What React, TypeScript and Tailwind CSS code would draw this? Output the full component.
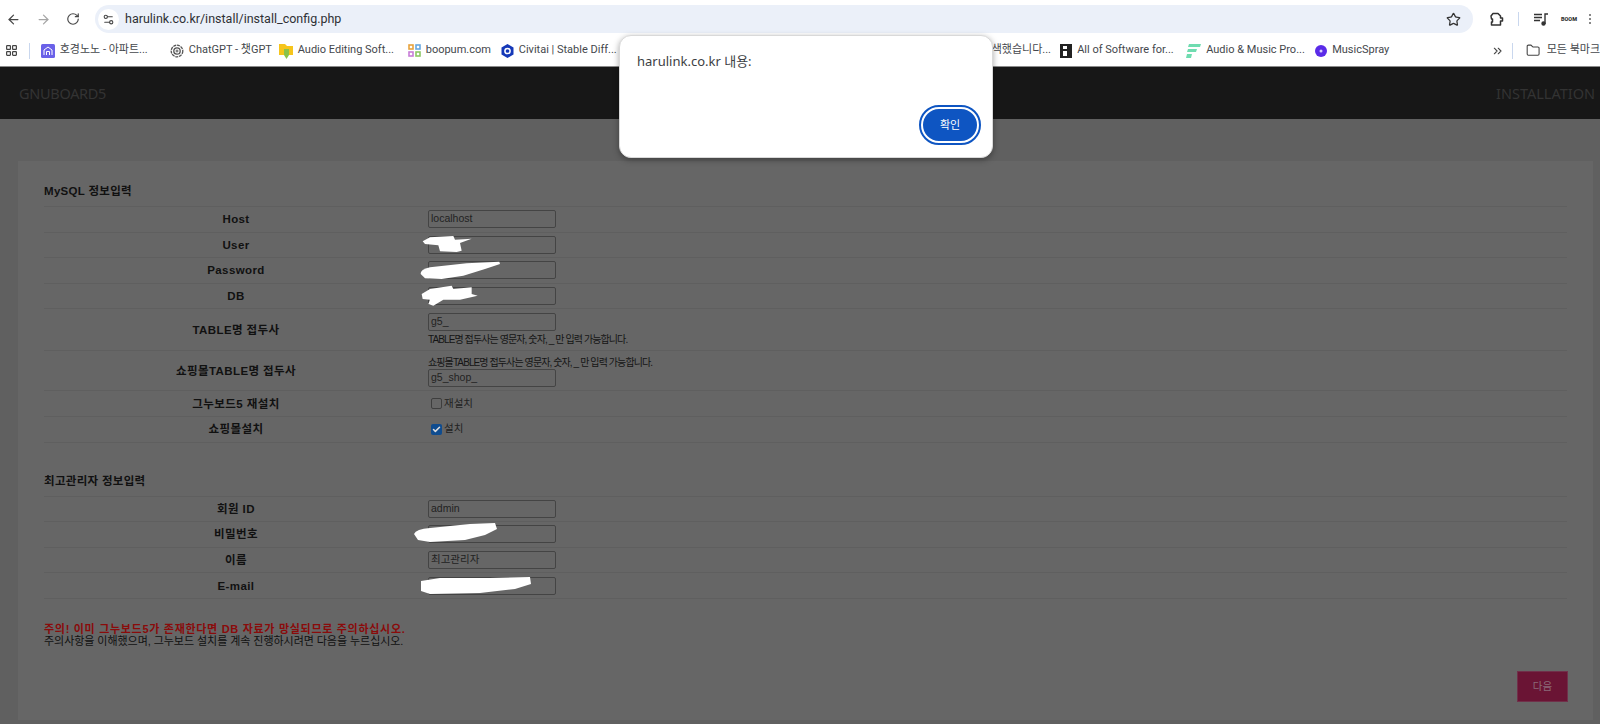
import { ArrowLeft, ArrowRight, Check, ChevronsRight, Folder, LayoutGrid, RotateCw, Settings2, Star } from 'lucide-react'
import type { ReactNode } from 'react'

const uiFont = 'font-["Roboto","Noto_Sans_CJK_KR",sans-serif]'
const dialogFont = 'font-["Noto_Sans","Noto_Sans_CJK_KR",sans-serif]'
const pageFont = 'font-["Liberation_Sans","Noto_Sans_CJK_KR",sans-serif]'

function Bookmark({ icon, text, className }: { icon: ReactNode; text: string; className: string }) {
  return (
    <div className={`flex items-center shrink-0 ${className}`}>
      {icon}
      <span className="ml-[5px] text-[11px] text-[#44474c] whitespace-nowrap">{text}</span>
    </div>
  )
}

function Row({ label, className = 'h-[25.6px]', children }: { label: string; className?: string; children: ReactNode }) {
  return (
    <div className={`flex items-center border-b border-[#5f5f5f] ${className}`}>
      <div className="w-[384px] pt-px text-center text-[11.5px] font-bold tracking-[0.4px] text-[#111]">{label}</div>
      <div className="flex-1">{children}</div>
    </div>
  )
}

function Field({ value = '', scribble }: { value?: string; scribble?: ReactNode }) {
  return (
    <div className="relative w-[128px] h-[18px] border-[1.5px] border-[#444] rounded-[2px] px-[2px] text-[10.5px] leading-[14px] text-[#222]">
      {value}
      {scribble}
    </div>
  )
}

function Scribble({ className, box, d }: { className: string; box: string; d: string }) {
  return (
    <svg className={`absolute max-w-none ${className}`} viewBox={box} fill="#fff">
      <path d={d} />
    </svg>
  )
}

function SectionTitle({ children, className }: { children: ReactNode; className: string }) {
  return <div className={`text-[11.5px] font-bold tracking-[0.3px] text-[#111] leading-[15px] ${className}`}>{children}</div>
}

export default function App() {
  return (
    <div className={`relative w-[1600px] h-[724px] overflow-hidden bg-[#606060] ${uiFont}`}>
      {/* browser toolbar */}
      <div className="h-[33px] bg-white flex items-center pt-[5px] text-[#474747]">
        <div className="flex items-center w-[95px] pl-[6px] gap-[15px]">
          <ArrowLeft size={15} strokeWidth={2} />
          <ArrowRight size={15} strokeWidth={2} className="text-[#a6a6a6]" />
          <RotateCw size={14} strokeWidth={2} />
        </div>
        <div className="w-[1378px] h-[28px] rounded-full bg-[#ebf0f9] flex items-center pl-[3px]">
          <div className="w-[21px] h-[21px] rounded-full bg-white flex items-center justify-center">
            <Settings2 size={13} strokeWidth={2} />
          </div>
          <span className="ml-[6px] text-[12.5px] text-[#2f3135]">harulink.co.kr/install/install_config.php</span>
          <Star size={15} strokeWidth={2} className="ml-auto mr-[12px] text-[#333]" />
        </div>
        <svg className="ml-[16px]" width="16" height="16" viewBox="0 0 16 16" fill="none" stroke="#333" strokeWidth="1.5" strokeLinejoin="round">
          <path d="M2 5 L4 2.5 H9 L11.5 5 V7 H13.5 V10 H11.5 V14 H2.5 V11 H3.5 V8 H2.5 Z" />
        </svg>
        <div className="ml-[13px] w-px h-[14px] bg-[#c9d7ee]" />
        <svg className="ml-[15px]" width="15" height="14" viewBox="0 0 15 14" fill="none" stroke="#333" strokeWidth="1.4">
          <path d="M0 2.5 H8 M0 5.5 H8 M0 8.5 H6" />
          <path d="M11 12 V2 H14" />
          <circle cx="9.5" cy="11.5" r="1.5" fill="#333" />
        </svg>
        <div className="ml-[12px] w-[16px] text-center text-[5.5px] font-black text-[#333]">BOOM</div>
        <div className="ml-[12px] flex flex-col gap-[2px]">
          <span className="w-[2px] h-[2px] bg-[#888]" />
          <span className="w-[2px] h-[2px] bg-[#888]" />
          <span className="w-[2px] h-[2px] bg-[#888]" />
        </div>
      </div>

      {/* bookmarks */}
      <div className="h-[34px] pt-[2px] bg-white border-b border-[#8a8a8a] flex items-center text-[#44474c]">
        <div className="w-[30px] pl-[5px]"><LayoutGrid size={13} strokeWidth={2.2} className="text-[#444]" /></div>
        <div className="w-px h-[16px] bg-[#c9d7ee]" />
        <Bookmark
          className="ml-[11px] w-[129px]"
          text="호경노노 - 아파트..."
          icon={<svg width="14" height="14" viewBox="0 0 14 14"><rect width="14" height="14" rx="1.5" fill="#6a61e8" /><path d="M3 11 V6 L7 3 L11 6 V11 M5.5 11 V7.5 H8.5 V11" fill="none" stroke="#fff" strokeWidth="1" /></svg>}
        />
        <Bookmark
          className="w-[109px]"
          text="ChatGPT - 챗GPT"
          icon={<svg width="14" height="14" viewBox="0 0 14 14" fill="none" stroke="#555"><circle cx="7" cy="7" r="5.8" strokeWidth="1.3" strokeDasharray="3 0.8" /><circle cx="7" cy="7" r="3.2" strokeWidth="1.3" /><circle cx="7" cy="7" r="1" strokeWidth="1" /></svg>}
        />
        <Bookmark
          className="w-[129px]"
          text="Audio Editing Soft..."
          icon={<svg width="14" height="16" viewBox="0 0 14 16"><path d="M0 1h6l2 2h6v9H0z" fill="#f6c51c" /><path d="M5 6h5v6l-2.5 4L5 12z" fill="#8bc34a" /></svg>}
        />
        <Bookmark
          className="w-[93px]"
          text="boopum.com"
          icon={<svg width="13" height="14" viewBox="0 0 13 14" fill="none" strokeWidth="1.6"><rect x="1" y="1" width="4" height="4" stroke="#e8a33d" /><rect x="8" y="1" width="4" height="4" stroke="#68a8e0" /><rect x="1" y="8" width="4" height="4" stroke="#c77dd8" /><rect x="8" y="8" width="4" height="4" stroke="#8cc665" /></svg>}
        />
        <Bookmark
          className="w-[491px]"
          text="Civitai | Stable Diff..."
          icon={<svg width="13" height="14" viewBox="0 0 13 14"><path d="M6.5 0l6 3.5v7L6.5 14l-6-3.5v-7z" fill="#1538b8" /><circle cx="6.5" cy="7" r="2.6" fill="none" stroke="#fff" strokeWidth="1.5" /></svg>}
        />
        <div className="w-[72px] text-[11px] whitespace-nowrap">색했습니다...</div>
        <Bookmark
          className="w-[126px]"
          text="All of Software for..."
          icon={<svg width="12" height="14" viewBox="0 0 12 14"><rect width="12" height="14" fill="#222" /><rect x="3" y="2" width="4" height="3" fill="#fff" /><rect x="3" y="7" width="4" height="5" fill="#fff" /></svg>}
        />
        <Bookmark
          className="w-[129px]"
          text="Audio & Music Pro..."
          icon={<svg width="15" height="14" viewBox="0 0 15 14" fill="#6fdcb0"><path d="M3 0h12l-1 3H2zM2 5h9l-1 3H1zM1 10h5l-1 4H0z" /></svg>}
        />
        <Bookmark
          className="w-[176px]"
          text="MusicSpray"
          icon={<svg width="12" height="12" viewBox="0 0 12 12"><circle cx="6" cy="6" r="6" fill="#5a2be8" /><circle cx="6" cy="6" r="1.5" fill="#d8ccff" /></svg>}
        />
        <ChevronsRight size={14} strokeWidth={2} className="text-[#444]" />
        <div className="ml-[8px] w-px h-[16px] bg-[#c9d7ee]" />
        <Folder size={15} strokeWidth={1.8} className="ml-[13px] text-[#444]" />
        <span className="ml-[6px] text-[11px] whitespace-nowrap">모든 북마크</span>
      </div>

      {/* gnuboard header */}
      <div className={`h-[52px] bg-[#171717] flex items-center justify-between pl-[19px] pr-[5px] pt-[2px] text-[14.5px] text-[#333] ${dialogFont}`}>
        <span className="tracking-[-0.3px]">GNUBOARD5</span>
        <span>INSTALLATION</span>
      </div>

      {/* install form */}
      <div className={`mt-[42px] ml-[18px] w-[1575px] h-[559px] bg-[#666] px-[26px] pt-[23px] ${pageFont}`}>
        <SectionTitle className="mb-[7px]">MySQL 정보입력</SectionTitle>
        <div className="border-t border-[#5f5f5f]">
          <Row label="Host"><Field value="localhost" /></Row>
          <Row label="User">
            <Field scribble={<Scribble className="-left-[19.5px] -top-[8.5px] w-[150px] h-[30px]" box="0 0 450 90" d="M38 40 L60 28 L130 24 L135 35 L185 32 L150 45 L155 68 L140 72 L90 70 L85 52 L45 48 Z" />} />
          </Row>
          <Row label="Password">
            <Field scribble={<Scribble className="-left-[19.5px] -top-[8.5px] w-[150px] h-[30px]" box="0 75 450 90" d="M32 135 Q30 122 60 115 L170 103 L268 98 L270 105 L225 120 L160 140 L95 150 L45 148 Z" />} />
          </Row>
          <Row label="DB">
            <Field scribble={<Scribble className="-left-[19.5px] -top-[8.5px] w-[150px] h-[30px]" box="0 153 450 90" d="M35 195 L60 180 L125 170 L130 180 L185 175 L185 195 L203 200 L150 212 L100 212 L70 230 L55 225 L60 212 L38 210 Z" />} />
          </Row>
          <Row label="TABLE명 접두사" className="h-[42px]">
            <Field value="g5_" />
            <div className="mt-[3px] text-[10px] leading-[12px] tracking-[-0.9px] text-[#151515]">TABLE명 접두사는 영문자, 숫자, _ 만 입력 가능합니다.</div>
          </Row>
          <Row label="쇼핑몰TABLE명 접두사" className="h-[40px]">
            <div className="pt-[3px] text-[10px] leading-[12px] tracking-[-0.9px] text-[#151515]">쇼핑몰TABLE명 접두사는 영문자, 숫자, _ 만 입력 가능합니다.</div>
            <Field value="g5_shop_" />
          </Row>
          <Row label="그누보드5 재설치">
            <label className="flex items-center pl-[3px] text-[10.5px] text-[#222]">
              <span className="w-[11px] h-[11px] border border-[#3e3e3e] rounded-[2px] mr-[2px]" />
              재설치
            </label>
          </Row>
          <Row label="쇼핑몰설치">
            <label className="flex items-center pl-[3px] text-[10.5px] text-[#222]">
              <span className="w-[11px] h-[11px] bg-[#0f4c8f] rounded-[2px] mr-[2px] flex items-center justify-center">
                <Check size={9} strokeWidth={4} className="text-[#ddd]" />
              </span>
              설치
            </label>
          </Row>
        </div>

        <SectionTitle className="mt-[31px] mb-[7px]">최고관리자 정보입력</SectionTitle>
        <div className="border-t border-[#5f5f5f]">
          <Row label="회원 ID"><Field value="admin" /></Row>
          <Row label="비밀번호">
            <Field scribble={<Scribble className="-left-[15.5px] -top-[5.5px] w-[90px] h-[24px]" box="414 522 90 24" d="M414 535 Q416 530 430 529 L470 525 L495 524 L497 530 L485 536 L465 541 L430 543 L418 541 Z" />} />
          </Row>
          <Row label="이름"><Field value="최고관리자" /></Row>
          <Row label="E-mail">
            <Field scribble={<Scribble className="-left-[15.5px] -top-[4.5px] w-[130px] h-[24px]" box="414 574 130 24" d="M421 582 L440 579 L490 579 L530 578 L531 585 L515 590 L480 594 L430 595 L421 592 Z" />} />
          </Row>
        </div>

        <div className="mt-[24px] text-[11px] leading-[12px]">
          <div className="font-bold tracking-[0.7px] text-[#8a0b0b]">주의! 이미 그누보드5가 존재한다면 DB 자료가 망실되므로 주의하십시오.</div>
          <div className="tracking-[-0.05px] text-[#111]">주의사항을 이해했으며, 그누보드 설치를 계속 진행하시려면 다음을 누르십시오.</div>
        </div>

        <div className="flex justify-end mt-[24px] mr-[-1px]">
          <button className="w-[51px] h-[31px] bg-[#6a1434] text-[10.5px] text-[#8a6a78] border border-[#70304a]">다음</button>
        </div>
      </div>

      {/* alert dialog */}
      <div className={`absolute left-[619px] top-[35px] w-[374px] h-[123px] bg-white rounded-[12px] border border-[#d9d9d9] shadow-[0_2px_6px_rgba(0,0,0,0.35)] ${dialogFont}`}>
        <div className="absolute left-[17px] top-[16px] text-[13px] text-[#3c4043]">harulink.co.kr 내용:</div>
        <button className="absolute right-[13px] bottom-[14px] w-[58px] h-[36px] rounded-full bg-[#0e55c2] border-[2px] border-white outline-[2px] outline-[#0e55c2] outline-offset-0 text-[11px] text-white">
          확인
        </button>
      </div>
    </div>
  )
}
